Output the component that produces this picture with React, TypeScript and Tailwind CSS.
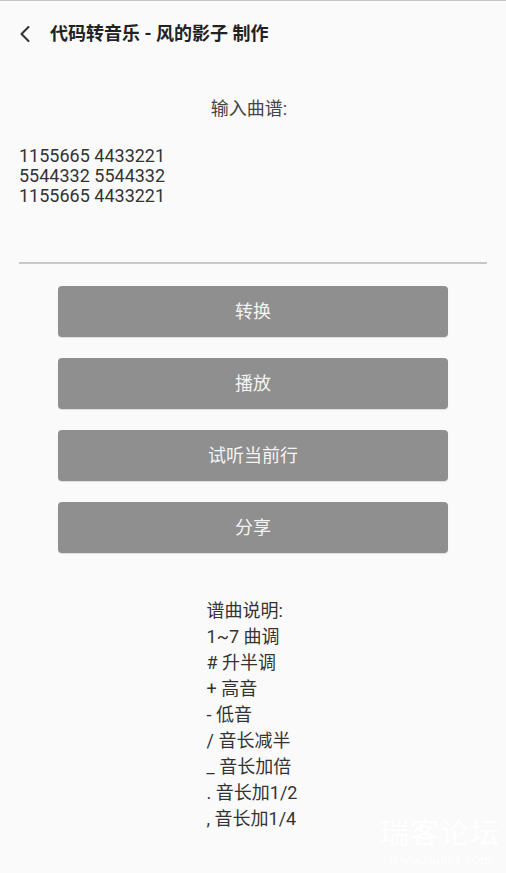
import { ChevronLeft } from "lucide-react"

const buttons = ["转换", "播放", "试听当前行", "分享"]

const notes = [
  "谱曲说明:",
  "1~7 曲调",
  "# 升半调",
  "+ 高音",
  "- 低音",
  "/ 音长减半",
  "_ 音长加倍",
  ". 音长加1/2",
  ", 音长加1/4",
]

export default function App() {
  return (
    <div
      className="relative flex h-[873px] w-[506px] flex-col overflow-hidden border-t border-[#c4c4c4] bg-[#fafafa] text-[#333]"
      style={{ fontFamily: 'Roboto, "Noto Sans CJK SC", sans-serif' }}
    >
      {/* Toolbar */}
      <div className="flex h-[65px] items-center pl-[11px]">
        <ChevronLeft className="h-[28px] w-[28px] text-[#333]" strokeWidth={1.8} />
        <span className="ml-[11px] text-[18px] font-bold text-[#222]">代码转音乐 - 风的影子 制作</span>
      </div>

      {/* Input */}
      <div className="mt-[30px] pr-[8px] text-center text-[18px] leading-[26px] text-[#444]">输入曲谱:</div>
      <div className="mt-[24px] px-[19px] text-[18px] leading-[20px] text-[#333]">
        <div>1155665 4433221</div>
        <div>5544332 5544332</div>
        <div>1155665 4433221</div>
      </div>
      <div className="mx-[19px] mt-[56px] h-[2px] bg-[#c8c8c8]" />

      {/* Buttons */}
      <div className="mt-[22px] flex flex-col gap-[21px] px-[58px]">
        {buttons.map((label) => (
          <button
            key={label}
            type="button"
            className="flex h-[51px] items-center justify-center rounded-[4px] bg-[#8f8f8f] text-[18px] text-[#f4f4f4] shadow-[0_1px_1px_rgba(0,0,0,0.12)]"
          >
            {label}
          </button>
        ))}
      </div>

      {/* Help */}
      <div className="mt-[45px] flex justify-center pr-[2px]">
        <div className="text-[18px] leading-[26px] text-[#333]">
          {notes.map((line) => (
            <div key={line}>{line}</div>
          ))}
        </div>
      </div>

      {/* Watermark */}
      <div className="absolute right-[6px] bottom-[6px] flex flex-col items-center text-white">
        <span className="text-[29px] leading-[34px] tracking-[1px]">瑞客论坛</span>
        <span className="text-[15px] leading-[16px]" style={{ fontFamily: '"Liberation Serif", serif' }}>
          www.ruike1.com
        </span>
      </div>
    </div>
  )
}
